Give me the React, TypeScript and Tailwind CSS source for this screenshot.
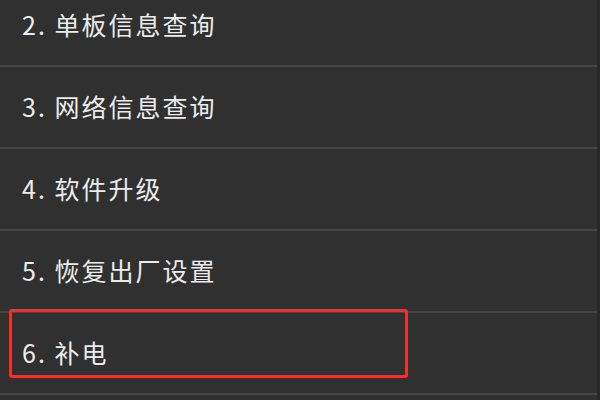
const ITEMS = ["2. 单板信息查询", "3. 网络信息查询", "4. 软件升级", "5. 恢复出厂设置", "6. 补电"];

export default function App() {
  return (
    <div className="w-[600px] h-[400px] overflow-hidden bg-[#303030] border-r-[3px] border-[#282828]">
      <ul className="-mt-[15px]" style={{ fontFamily: '"Noto Sans CJK SC", "Noto Sans", sans-serif' }}>
        {ITEMS.map((label, i) => (
          <li key={label} className="relative h-[82px] flex items-center pl-[22px] border-b-2 border-[#454545] text-[25px] tracking-[2px] text-[#ececec]">
            {label}
            {i === ITEMS.length - 1 && (
              <div className="absolute left-[9px] top-[-4px] w-[399px] h-[69px] border-[3.5px] border-[#f0302a] rounded-[3px]" />
            )}
          </li>
        ))}
      </ul>
    </div>
  );
}
